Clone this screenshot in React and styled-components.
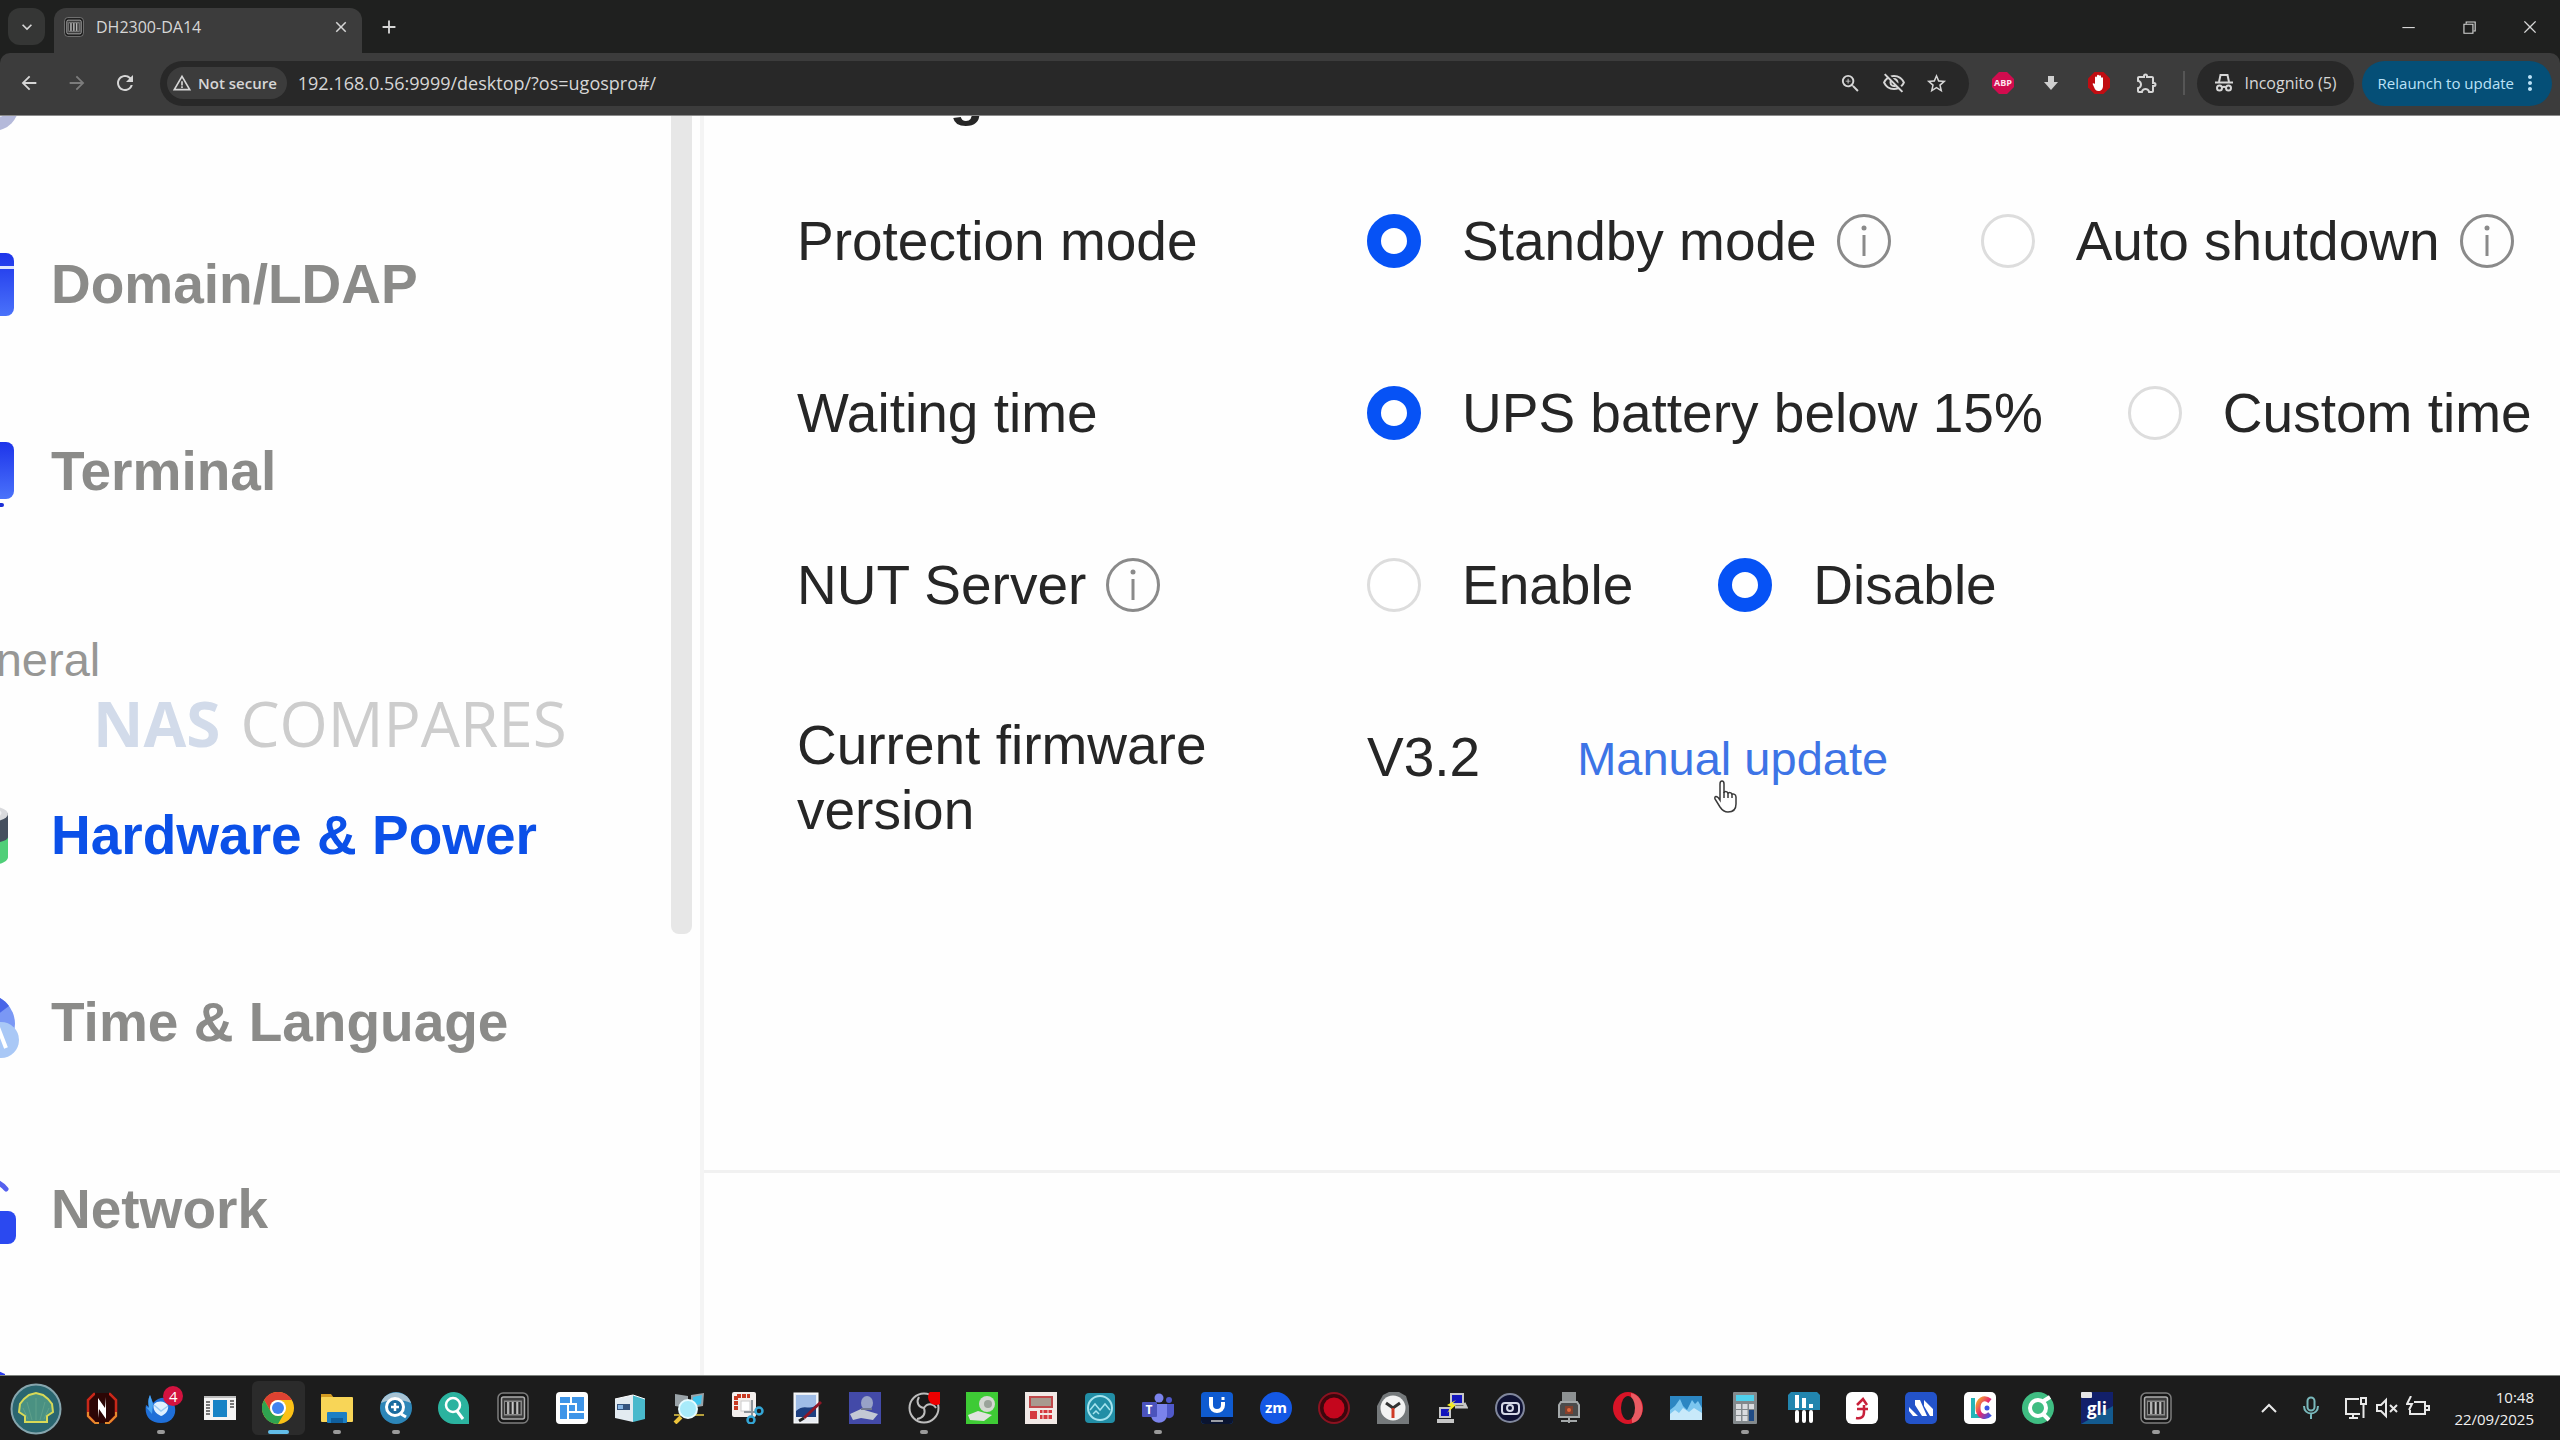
import { useState } from "react";
import styled, { createGlobalStyle } from "styled-components";
import {
  MdAdd,
  MdArrowBack,
  MdArrowForward,
  MdClose,
  MdKeyboardArrowDown,
  MdMoreVert,
  MdOutlineExtension,
  MdOutlineVisibilityOff,
  MdRefresh,
  MdStarBorder,
  MdWarningAmber,
  MdZoomIn,
} from "react-icons/md";
import {
  VscChromeClose,
  VscChromeMinimize,
  VscChromeRestore,
} from "react-icons/vsc";

/* ---------- browser icons ---------- */

const NasIcon = ({ size = 32 }) => (
  <svg width={size} height={size} viewBox="0 0 32 32" fill="none">
    <rect x="1" y="1" width="30" height="30" rx="5" fill="#151515" stroke="#7d7d7d" strokeWidth="1.5" />
    <rect x="4.500" y="5" width="23" height="22" rx="2" fill="#3d3d3d" stroke="#adadad" strokeWidth="1.500" />
    <rect x="7" y="8.500" width="18" height="15" fill="#8a8a8a" />
    <path d="M9 10v12M13.500 10v12M18 10v12M22.500 10v12" stroke="#2b2b2b" strokeWidth="2" />
    <path d="M11 10v12M15.700 10v12M20.200 10v12" stroke="#d5d5d5" strokeWidth="1" />
  </svg>
);

const AbpIcon = () => (
  <svg width="22" height="22" viewBox="0 0 22 22">
    <path d="M7 0h8l7 7v8l-7 7H7l-7-7V7z" fill="#d10c4e" />
    <text x="11" y="14" fontSize="9" fontWeight="700" fill="#ffe3ee" textAnchor="middle" fontFamily="Open Sans, sans-serif">ABP</text>
  </svg>
);

const DownIcon = () => (
  <svg width="16" height="16" viewBox="0 0 16 16">
    <path d="M5 1h6v6h4l-7 8-7-8h4z" fill="#cfcfcf" />
  </svg>
);

const HandIcon = () => (
  <svg width="24" height="24" viewBox="0 0 24 24">
    <path d="M7.500 1h9L23 7.500v9L16.500 23h-9L1 16.500v-9z" fill="#c00d12" />
    <path
      d="M8 13V6.500a1 1 0 0 1 2 0V11V4.800a1 1 0 0 1 2 0V11V5.200a1 1 0 0 1 2 0V12V7.200a1 1 0 0 1 2 0V15c0 3-2 5-4.500 5S8 18.500 7 16l-1.500-3.200c.8-1 1.800-.6 2.500.2z"
      fill="#fff"
    />
  </svg>
);

const IncognitoIcon = () => (
  <svg width="20" height="20" viewBox="0 0 20 20" fill="none" stroke="#d6d6d6" strokeWidth="2">
    <path d="M5 9l1.500-7h7L15 9" />
    <path d="M1 9.500h18" />
    <circle cx="5.500" cy="15" r="2.500" />
    <circle cx="14.500" cy="15" r="2.500" />
    <path d="M8 14.500c1-.8 3-.8 4 0" />
  </svg>
);

/* ---------- control panel icons ---------- */

const UserIcon = () => (
  <svg width="72" height="72" viewBox="0 0 72 72">
    <circle cx="46" cy="44" r="26" fill="#b4b9da" />
    <circle cx="48" cy="42" r="15" fill="#dfe1f1" />
  </svg>
);

const DomainIcon = () => (
  <svg width="72" height="72" viewBox="0 0 72 72">
    <defs>
      <linearGradient id="domain" x1="0" y1="0" x2="0" y2="1">
        <stop offset="0" stopColor="#1d34ea" />
        <stop offset="1" stopColor="#4a72fa" />
      </linearGradient>
    </defs>
    <rect x="0" y="5" width="67" height="63" rx="8" fill="url(#domain)" />
    <rect x="0" y="18" width="67" height="3" fill="#dfe6ff" />
  </svg>
);

const TerminalIcon = () => (
  <svg width="72" height="72" viewBox="0 0 72 72">
    <rect x="0" y="7" width="67" height="57" rx="8" fill="url(#domain)" />
    <rect x="14" y="68" width="43" height="4" rx="2" fill="#1c2fd6" />
  </svg>
);

const PowerIcon = () => (
  <svg width="72" height="72" viewBox="0 0 72 72">
    <path d="M10 14v44c0 12 51 12 51 0V14z" fill="#50cf78" />
    <path d="M10 14v24c0 9 51 9 51 0V14z" fill="#454f5e" />
    <ellipse cx="35.500" cy="15" rx="25.500" ry="9" fill="#d9dadd" />
    <ellipse cx="35.500" cy="14" rx="19" ry="6" fill="#f0f0f2" />
  </svg>
);

const TimeIcon = () => (
  <svg width="72" height="72" viewBox="0 0 72 72">
    <circle cx="38" cy="38" r="30" fill="#7a98f5" />
    <path d="M38 8c10 0 19 5 24 12l-24 18z" fill="#4865e8" />
    <circle cx="54" cy="54" r="18" fill="#a9c8f6" />
    <path d="M45 62l7-18 7 18" stroke="#fff" strokeWidth="4" fill="none" />
  </svg>
);

const NetworkIcon = () => (
  <svg width="72" height="72" viewBox="0 0 72 72">
    <path d="M14 16c11-13 34-13 45 0" stroke="#5661ee" strokeWidth="5" fill="none" strokeLinecap="round" />
    <path d="M23 25c7-7 20-7 27 0" stroke="#6e7bf3" strokeWidth="5" fill="none" strokeLinecap="round" />
    <rect x="2" y="38" width="67" height="33" rx="8" fill="#2b49f0" />
  </svg>
);

const SecurityIcon = () => (
  <svg width="72" height="72" viewBox="0 0 72 72">
    <path d="M30 2l28 12v24c0 18-28 32-28 32S2 56 2 38V14z" fill="#2b3cf0" />
  </svg>
);

const InfoIcon = () => (
  <svg width="54" height="54" viewBox="0 0 54 54" fill="none">
    <circle cx="27" cy="27" r="25.500" stroke="#8a8a8a" strokeWidth="3" />
    <circle cx="27" cy="14" r="2.500" fill="#8a8a8a" />
    <path d="M27 21v21" stroke="#8a8a8a" strokeWidth="3" />
  </svg>
);

/* ---------- taskbar icons, drawn on a 32 x 32 grid ---------- */

const Svg = ({ children }) => (
  <svg width="32" height="32" viewBox="0 0 32 32" fill="none">
    {children}
  </svg>
);

const Label = ({ children, y = 21, size = 14, fill = "#fff", x = 16 }) => (
  <text x={x} y={y} fontSize={size} fontWeight="700" fill={fill} textAnchor="middle" fontFamily="Open Sans, sans-serif">
    {children}
  </text>
);

const apps = [
  {
    name: "Nitro",
    icon: (
      <Svg>
        <path d="M7 1h18l6 6v17l-6 7H7l-6-7V7z" fill="#2c0605" />
        <path d="M9 2H8L2 8v16l6 6M23 2h1l6 6v16l-6 6" stroke="#c9281a" strokeWidth="2.500" />
        <path d="M2 20v4l7 7h4M30 20v4l-7 7h-4" stroke="#e58a2c" strokeWidth="2" />
        <path d="M12 6l7 10 1-11v22l-7-10-1 9z" fill="#fff" />
      </Svg>
    ),
  },
  {
    name: "Thunderbird",
    open: true,
    badge: "4",
    icon: (
      <Svg>
        <path d="M5 3l3 8C14 4 25 4 29 12c4 10-2 19-13 19S-1 24 1 13l3 2C3 11 3 7 5 3z" fill="#1f6fd8" />
        <path d="M5 3l3 9-1 10-6-7 3 1C3 11 3 7 5 3z" fill="#4ba5f2" />
        <path d="M9 12c4-4 12-3 14 2 1 4-3 9-7 10-5-2-9-7-7-12z" fill="#dff0ff" />
        <path d="M9 13l7 6 7-5" stroke="#9ccbf5" strokeWidth="1.500" />
      </Svg>
    ),
  },
  {
    name: "Magnifier window",
    icon: (
      <Svg>
        <rect x="0" y="4" width="32" height="24" fill="#f4f4f4" />
        <path d="M0 5h32" stroke="#bdbdbd" strokeWidth="2" />
        <rect x="9" y="8" width="14" height="17" fill="#1783c6" />
        <path d="M4 9v15M28 8v9" stroke="#777" strokeWidth="4" strokeDasharray="2 1" />
      </Svg>
    ),
  },
  {
    name: "Chrome",
    open: true,
    active: true,
    icon: (
      <Svg>
        <circle cx="16" cy="16" r="16" fill="#fbc116" />
        <path d="M2.140 8A16 16 0 0 1 29.860 8H16a8 8 0 0 0-6.930 12z" fill="#dd4232" />
        <path d="M2.140 8A16 16 0 0 0 16 32l6.930-12A8 8 0 0 1 9.070 20z" fill="#2fa350" />
        <circle cx="16" cy="16" r="8" fill="#fff" />
        <circle cx="16" cy="16" r="6" fill="#4083ee" />
      </Svg>
    ),
  },
  {
    name: "File Explorer",
    open: true,
    icon: (
      <Svg>
        <path d="M0 2h10l3 4H0z" fill="#d39b22" />
        <rect x="0" y="5" width="32" height="25" rx="1" fill="#f8d557" />
        <rect x="6" y="20" width="20" height="11" rx="1" fill="#1c7fc4" />
        <path d="M10 31v-5h12v5z" fill="#0f5f9e" />
      </Svg>
    ),
  },
  {
    name: "Remote search",
    open: true,
    icon: (
      <Svg>
        <circle cx="16" cy="16" r="16" fill="#2d86b8" />
        <path d="M1 11C5-3 27-3 31 11c-8-4-22-4-30 0z" fill="#a7c3d4" />
        <circle cx="15" cy="15" r="8.500" fill="#1a6b9e" stroke="#fff" strokeWidth="3" />
        <path d="M11 15h8M15 11v8" stroke="#fff" strokeWidth="2.500" />
        <path d="M21 22l5 3" stroke="#fff" strokeWidth="3" />
      </Svg>
    ),
  },
  {
    name: "Qfinder",
    icon: (
      <Svg>
        <path d="M16 0a16 16 0 1 0 0 32h15V17A16 16 0 0 0 16 0z" fill="#2bb39f" />
        <circle cx="15" cy="13" r="7" stroke="#fff" strokeWidth="2.500" />
        <path d="M19 19l6 8" stroke="#fff" strokeWidth="3" />
      </Svg>
    ),
  },
  { name: "Ugreen NAS", icon: <NasIcon /> },
  {
    name: "Control panel",
    icon: (
      <Svg>
        <rect width="32" height="32" rx="4" fill="#fff" />
        <rect x="4" y="5" width="24" height="22" fill="#3f95e8" />
        <path d="M15 5v7M4 12h16v8M12 12v8h16M12 20v7M20 20v0" stroke="#fff" strokeWidth="2" />
      </Svg>
    ),
  },
  {
    name: "Server",
    icon: (
      <Svg>
        <path d="M1 7l18-4v27L1 26z" fill="#e3ebf1" />
        <path d="M19 3l12 4v20l-12 3z" fill="#49b9cc" />
        <path d="M1 7l18-4 12 4" stroke="#fff" />
        <rect x="3" y="12" width="13" height="6" fill="#35547e" />
        <rect x="4" y="13" width="5" height="4" fill="#86b5e4" />
      </Svg>
    ),
  },
  {
    name: "Network scanner",
    icon: (
      <Svg>
        <path d="M2 2l13 2v12L2 14zM18 3l13-2-1 13-12 2z" fill="#9aa3a8" />
        <path d="M20 5l9-2-1 9-8 2z" fill="#3fc3ec" />
        <path d="M1 23h30" stroke="#b6a03c" strokeWidth="2" />
        <circle cx="15" cy="17" r="9" fill="#a8ebfa" stroke="#e6fbff" strokeWidth="2" />
        <path d="M8 25l-6 6" stroke="#ecc33b" strokeWidth="4" />
      </Svg>
    ),
  },
  {
    name: "Snip",
    icon: (
      <Svg>
        <rect x="0" y="0" width="24" height="25" rx="2" fill="#f3efed" />
        <path d="M4 18V4h14" stroke="#c83a22" strokeWidth="4" strokeDasharray="4 1" />
        <rect x="9" y="9" width="9" height="10" fill="#fff" stroke="#ccc" />
        <path d="M20 8v16M12 20h13" stroke="#8e959b" strokeWidth="2" />
        <circle cx="27" cy="19" r="3.500" stroke="#34a6d6" strokeWidth="2.500" />
        <circle cx="19" cy="28" r="3.500" stroke="#34a6d6" strokeWidth="2.500" />
      </Svg>
    ),
  },
  {
    name: "Image editor",
    icon: (
      <Svg>
        <rect x="4" y="1" width="24" height="30" fill="#e8ecf2" stroke="#fff" />
        <rect x="6" y="3" width="20" height="22" fill="#1d3f80" />
        <path d="M6 3h20v10c-6 6-12-2-20 6z" fill="#9fbce6" />
        <path d="M31 10L14 26" stroke="#8f1626" strokeWidth="3" />
        <path d="M14 26l-5 3" stroke="#222" strokeWidth="3" />
      </Svg>
    ),
  },
  {
    name: "Scanner blue",
    icon: (
      <Svg>
        <rect width="32" height="32" fill="#434aa8" />
        <path d="M1 22l11-5 17 5-5 6-12-2-8 2z" fill="#c3c8d4" />
        <ellipse cx="18" cy="11" rx="6" ry="7" fill="#98a2c7" />
        <path d="M12 17h11" stroke="#71788e" strokeWidth="2" />
      </Svg>
    ),
  },
  {
    name: "OBS",
    open: true,
    icon: (
      <Svg>
        <circle cx="16" cy="16" r="14.500" fill="#191919" stroke="#bdbdbd" strokeWidth="2" />
        <path d="M16 16c-6-1-8-6-5-11M16 16c3-5 9-5 12 0M16 16c2 6-1 10-7 11" stroke="#bdbdbd" strokeWidth="2" />
        <circle cx="28" cy="5" r="8" fill="#ee0000" />
      </Svg>
    ),
  },
  {
    name: "Scanner green",
    icon: (
      <Svg>
        <rect width="32" height="32" fill="#3ecb35" />
        <path d="M2 23l10-4 14 4-8 6-14-1z" fill="#dfe3dd" />
        <circle cx="21" cy="12" r="8" fill="#d3d8d2" />
        <circle cx="22" cy="12" r="4" fill="#9aa39a" />
      </Svg>
    ),
  },
  {
    name: "Raid calculator",
    icon: (
      <Svg>
        <rect width="32" height="32" fill="#f1e9e6" />
        <rect x="5" y="5" width="22" height="10" fill="#a89a8f" stroke="#c0484a" strokeWidth="2" />
        <path d="M5 19h7v8H5zM15 18h12v3H15zM15 23h12v4H15z" fill="#d5393f" />
        <path d="M18 18v9M23 18v9" stroke="#f1e9e6" />
      </Svg>
    ),
  },
  {
    name: "Monitor tool",
    icon: (
      <Svg>
        <rect x="1" y="1" width="30" height="30" rx="4" fill="#228ea6" />
        <circle cx="16" cy="16" r="12" stroke="#a5e3ee" strokeWidth="2" />
        <path d="M6 18l5-6 5 6 5-6 5 6M9 22l3-3 3 3" stroke="#a5e3ee" strokeWidth="1.500" />
      </Svg>
    ),
  },
  {
    name: "Teams",
    open: true,
    icon: (
      <Svg>
        <circle cx="17" cy="6" r="4.500" fill="#7b83eb" />
        <circle cx="27" cy="8" r="3" fill="#5059c9" />
        <path d="M22 12h10v9c0 5-6 7-9 3z" fill="#5059c9" />
        <path d="M8 12h17v11c0 9-14 11-16 1z" fill="#7b83eb" />
        <rect x="0" y="10" width="15" height="15" rx="1" fill="#4b53bc" />
        <Label x={7} y={22} size={12}>T</Label>
      </Svg>
    ),
  },
  {
    name: "UniFi",
    icon: (
      <Svg>
        <rect width="32" height="32" rx="4" fill="#0f5bd0" />
        <path d="M0 25h32v3a4 4 0 0 1-4 4H4a4 4 0 0 1-4-4z" fill="#0a1430" />
        <path d="M10 5v8c0 8 12 8 12 0v-3" stroke="#fff" strokeWidth="4" />
        <path d="M22 5v3" stroke="#fff" strokeWidth="3" />
        <path d="M10 29h12" stroke="#ccc" strokeWidth="1.500" />
      </Svg>
    ),
  },
  {
    name: "Zoom",
    icon: (
      <Svg>
        <circle cx="16" cy="16" r="16" fill="#1458e4" />
        <Label y={21} size={15}>zm</Label>
      </Svg>
    ),
  },
  {
    name: "Recorder",
    icon: (
      <Svg>
        <circle cx="16" cy="16" r="15" fill="#3c070d" stroke="#8c1220" strokeWidth="2" />
        <circle cx="16" cy="16" r="10.500" fill="#c4061d" />
      </Svg>
    ),
  },
  {
    name: "Clock",
    icon: (
      <Svg>
        <path d="M0 32V14l6-11L12 0h10l7 4 3 10v18z" fill="#75797b" />
        <circle cx="16" cy="16" r="12.500" fill="#f3f3f3" />
        <path d="M9 11l7 5 7-5" stroke="#333" strokeWidth="3" />
        <path d="M16 16v10" stroke="#cf3a25" strokeWidth="3" />
      </Svg>
    ),
  },
  {
    name: "PuTTY",
    icon: (
      <Svg>
        <rect x="15" y="2" width="12" height="10" fill="#1315bd" stroke="#c6c6c6" strokeWidth="2" />
        <path d="M19 15h11l-2-4" stroke="#c6c6c6" strokeWidth="3" />
        <rect x="4" y="16" width="10" height="9" fill="#1315bd" stroke="#c6c6c6" strokeWidth="2" />
        <path d="M1 29h17" stroke="#c6c6c6" strokeWidth="4" />
        <path d="M20 8l-9 5 4 2-4 6 9-8-4-1z" fill="#f4ed22" />
      </Svg>
    ),
  },
  {
    name: "Camera",
    icon: (
      <Svg>
        <circle cx="16" cy="16" r="14" fill="#0f1233" stroke="#80879c" strokeWidth="2" />
        <rect x="8" y="11" width="17" height="11" rx="3" stroke="#d4d8e6" strokeWidth="2" />
        <circle cx="16" cy="16" r="3" stroke="#d4d8e6" strokeWidth="2" />
      </Svg>
    ),
  },
  {
    name: "Webcam",
    icon: (
      <Svg>
        <rect x="9" y="0" width="14" height="10" fill="#8d9192" />
        <path d="M8 10h16l2 3v12H6V13z" fill="#4b4b4b" stroke="#a4a8a9" strokeWidth="2" />
        <rect x="12" y="14" width="8" height="8" fill="#83402d" />
        <circle cx="16" cy="18" r="2" fill="#e2683c" />
        <path d="M16 26v5M8 29h16" stroke="#a4a8a9" strokeWidth="2" />
      </Svg>
    ),
  },
  {
    name: "Opera",
    icon: (
      <Svg>
        <ellipse cx="16" cy="16" rx="15" ry="16" fill="#d81427" />
        <path d="M19 1c14 2 16 27 1 30z" fill="#e95b63" />
        <ellipse cx="16" cy="16" rx="7" ry="12" fill="#1c1c1c" />
      </Svg>
    ),
  },
  {
    name: "Wave",
    icon: (
      <Svg>
        <rect x="0" y="4" width="32" height="24" fill="#2c86c2" />
        <path d="M0 18l5-4 5-7 3 7 4 4 5-10 3 4 3-3 4 7v12H0z" fill="#7cc6ef" />
        <path d="M0 22l5-4 4 3 4-5 6 4 5-4 8 5v7H0z" fill="#c8e9fa" />
      </Svg>
    ),
  },
  {
    name: "Calculator",
    open: true,
    icon: (
      <Svg>
        <rect x="4" y="0" width="24" height="32" rx="1" fill="#83898c" />
        <rect x="7" y="3" width="18" height="6" fill="#4fd0ec" />
        <path d="M7 12h5v5H7zM13.500 12h5v5h-5zM20 12h5v5h-5zM7 18h5v5H7zM13.500 18h5v5h-5zM7 24h5v5H7zM13.500 24h5v5h-5z" fill="#dadcdf" />
        <rect x="20" y="18" width="5" height="11" fill="#1f4b85" />
      </Svg>
    ),
  },
  {
    name: "Statistics",
    icon: (
      <Svg>
        <path d="M3 0h26l3 3v15H0V3z" fill="#2285ae" />
        <path d="M9 3v13M16 6v10M23 12v4" stroke="#fff" strokeWidth="4" />
        <path d="M9 20v9M16 20v9M23 20v9" stroke="#fff" strokeWidth="4" strokeLinecap="round" />
      </Svg>
    ),
  },
  {
    name: "Flash reader",
    icon: (
      <Svg>
        <rect width="32" height="32" rx="6" fill="#fff" />
        <path d="M11 13l6-6 4 6M11 17h11M18 13v7c0 5-3 7-8 6" stroke="#c8203a" strokeWidth="2.500" />
      </Svg>
    ),
  },
  {
    name: "Numark",
    icon: (
      <Svg>
        <rect width="32" height="32" rx="5" fill="#2353c9" />
        <path d="M4 15l9 9H8l-4-5zM10 8h5l7 16h-5L10 13zM19 8l9 9v7h-3l-6-10z" fill="#fff" />
      </Svg>
    ),
  },
  {
    name: "LC",
    icon: (
      <Svg>
        <defs>
          <linearGradient id="lc" x1="0" y1="0" x2="1" y2="1">
            <stop offset="0" stopColor="#f4a52b" />
            <stop offset="0.500" stopColor="#e8286f" />
            <stop offset="1" stopColor="#3a55e6" />
          </linearGradient>
        </defs>
        <rect width="32" height="32" rx="5" fill="#fff" />
        <path d="M9 6v18h8" stroke="#25b5b8" strokeWidth="4" />
        <path d="M26 9c-6-5-12-1-12 7s7 11 12 6" stroke="url(#lc)" strokeWidth="5" />
        <circle cx="23" cy="16" r="2.500" fill="#3a55e6" />
      </Svg>
    ),
  },
  {
    name: "Qsync",
    icon: (
      <Svg>
        <circle cx="16" cy="16" r="16" fill="#3fbd82" />
        <circle cx="16" cy="16" r="8" stroke="#fff" strokeWidth="4" />
        <path d="M20 10l8-5M21 22l6 6" stroke="#fff" strokeWidth="4" />
      </Svg>
    ),
  },
  {
    name: "GLI",
    icon: (
      <Svg>
        <rect width="32" height="32" fill="#12206a" />
        <path d="M0 32h32V14z" fill="#135a8f" />
        <rect x="0" y="0" width="11" height="6" rx="1" fill="#e6e6e6" />
        <Label y={23} size={17}>gli</Label>
      </Svg>
    ),
  },
  { name: "Ugreen NAS client", open: true, icon: <NasIcon /> },
];

const menu = [
  { text: "Domain/LDAP", icon: <DomainIcon /> },
  { text: "Terminal", icon: <TerminalIcon /> },
];

const generalMenu = [
  { text: "Hardware & Power", icon: <PowerIcon /> },
  { text: "Time & Language", icon: <TimeIcon /> },
  { text: "Network", icon: <NetworkIcon /> },
];

function RadioOption({ name, label, checked, onChange, info }) {
  return (
    <StOption $info={info}>
      <StRadioLabel>
        <StRadio type="radio" name={name} checked={checked} onChange={() => onChange(label)} />
        {label}
      </StRadioLabel>
      {info && <InfoIcon />}
    </StOption>
  );
}

function RadioRow({ name, title, options, initial, titleInfo, optionInfo }) {
  const [value, setValue] = useState(initial);
  return (
    <StRow>
      <StRowTitle>
        {title}
        {titleInfo && <InfoIcon />}
      </StRowTitle>
      <StControls role="radiogroup" aria-label={title}>
        {options.map((option) => (
          <RadioOption
            key={option}
            name={name}
            label={option}
            checked={value === option}
            onChange={setValue}
            info={optionInfo}
          />
        ))}
      </StControls>
    </StRow>
  );
}

function BrowserBar() {
  const [url, setUrl] = useState("192.168.0.56:9999/desktop/?os=ugospro#/");
  return (
    <StBrowser>
      <StTabStrip>
        <StTabSearch aria-label="Search tabs"><MdKeyboardArrowDown size={20} /></StTabSearch>
        <StTab>
          <NasIcon size={20} />
          <span>DH2300-DA14</span>
          <StIconBtn aria-label="Close tab" $width={24}><MdClose size={18} /></StIconBtn>
        </StTab>
        <StIconBtn aria-label="New tab" $width={54}><MdAdd size={22} /></StIconBtn>
        <StWindowBtns>
          <StIconBtn aria-label="Minimize" $width={61}><VscChromeMinimize size={18} /></StIconBtn>
          <StIconBtn aria-label="Restore" $width={61}><VscChromeRestore size={18} /></StIconBtn>
          <StIconBtn aria-label="Close" $width={61}><VscChromeClose size={18} /></StIconBtn>
        </StWindowBtns>
      </StTabStrip>
      <StToolbar>
        <StIconBtn aria-label="Back" $width={48}><MdArrowBack size={22} /></StIconBtn>
        <StIconBtn aria-label="Forward" $width={48} disabled><MdArrowForward size={22} /></StIconBtn>
        <StIconBtn aria-label="Reload" $width={48}><MdRefresh size={24} /></StIconBtn>
        <StAddress>
          <StChip><MdWarningAmber size={20} />Not secure</StChip>
          <StUrl aria-label="Address" value={url} onChange={(e) => setUrl(e.target.value)} />
          <StIconBtn aria-label="Zoom" $width={43}><MdZoomIn size={23} /></StIconBtn>
          <StIconBtn aria-label="Third-party cookies blocked" $width={43}><MdOutlineVisibilityOff size={24} /></StIconBtn>
          <StIconBtn aria-label="Bookmark" $width={43}><MdStarBorder size={23} /></StIconBtn>
        </StAddress>
        <StExtensions>
          <StIconBtn aria-label="Adblock Plus" $width={48}><AbpIcon /></StIconBtn>
          <StIconBtn aria-label="Downloader" $width={48}><DownIcon /></StIconBtn>
          <StIconBtn aria-label="Adblock" $width={48}><HandIcon /></StIconBtn>
          <StIconBtn aria-label="Extensions" $width={48}><MdOutlineExtension size={24} /></StIconBtn>
        </StExtensions>
        <StPill><IncognitoIcon />Incognito (5)</StPill>
        <StPill $update>Relaunch to update<MdMoreVert size={24} /></StPill>
      </StToolbar>
    </StBrowser>
  );
}

function Sidebar() {
  const [current, setCurrent] = useState("Hardware & Power");
  const renderItem = (item) => (
    <StNavItem key={item.text} $active={item.text === current} onClick={() => setCurrent(item.text)}>
      {item.icon}
      {item.text}
    </StNavItem>
  );
  return (
    <StSidebar>
      <StNav>
        <StNavItem aria-label="Users"><UserIcon /></StNavItem>
        {menu.map(renderItem)}
        <StNavGroup>General</StNavGroup>
        {generalMenu.map(renderItem)}
        <StNavItem aria-label="Security"><SecurityIcon /></StNavItem>
      </StNav>
      <StScrollThumb />
      <StWatermark><b>NAS</b> COMPARES</StWatermark>
    </StSidebar>
  );
}

function Taskbar() {
  return (
    <StTaskbar>
      <StStart aria-label="Start">
        <svg width="52" height="52" viewBox="0 0 52 52" fill="none">
          <circle cx="26" cy="26" r="24.500" fill="#2a6670" stroke="#86a5ad" strokeWidth="2" />
          <path d="M15 39v-6l-6-4 1-8 4-5 5-4 7-2 7 2 5 4 4 5 1 8-6 4v6z" fill="#4a9182" stroke="#d7d957" strokeWidth="2" />
          <path d="M26 37V15M22 37l-5-18M30 37l5-18M18 36l-5-11M34 36l5-11" stroke="#5fa08a" strokeWidth="1" />
        </svg>
      </StStart>
      <StApps>
        {apps.map((app) => (
          <StApp key={app.name} aria-label={app.name} $open={app.open} $active={app.active}>
            {app.icon}
            {app.badge && <StBadge>{app.badge}</StBadge>}
          </StApp>
        ))}
      </StApps>
      <StTray>
        <svg width="18" height="12" viewBox="0 0 18 12" fill="none">
          <path d="M2 10l7-7 7 7" stroke="#e8e8e8" strokeWidth="2" />
        </svg>
        <svg width="18" height="24" viewBox="0 0 18 24" fill="none" stroke="#79b8bb" strokeWidth="2">
          <rect x="5.500" y="1.500" width="7" height="13" rx="3.500" />
          <path d="M2 10c0 10 14 10 14 0M9 18v5" />
        </svg>
        <StStatus>
          <svg width="24" height="24" viewBox="0 0 24 24" fill="none" stroke="#e8e8e8" strokeWidth="2">
            <path d="M15 3H2v15h14M9 18v4M5 22h9" />
            <path d="M17 2h5v6h-5zM19.500 8v14" />
          </svg>
          <svg width="22" height="22" viewBox="0 0 22 22" fill="none" stroke="#e8e8e8" strokeWidth="2">
            <path d="M1 8h4l5-5v16l-5-5H1zM14 8l7 7M21 8l-7 7" />
          </svg>
          <svg width="24" height="24" viewBox="0 0 24 24" fill="none" stroke="#e8e8e8" strokeWidth="2">
            <path d="M8 6h11v12H4v-4M20 10h3v4h-3" />
            <path d="M5 0L1 8h5l-3 6" />
          </svg>
        </StStatus>
        <StClock>
          <time>10:48</time>
          <time>22/09/2025</time>
        </StClock>
      </StTray>
    </StTaskbar>
  );
}

function App() {
  return (
    <StScreen>
      <GlobalStyle />
      <BrowserBar />
      <StPage>
        <Sidebar />
        <StContent>
          <StPanel>
            <StHeading>Settings</StHeading>
            <StRows>
              <RadioRow
                name="protection"
                title="Protection mode"
                options={["Standby mode", "Auto shutdown"]}
                initial="Standby mode"
                optionInfo
              />
              <RadioRow
                name="waiting"
                title="Waiting time"
                options={["UPS battery below 15%", "Custom time"]}
                initial="UPS battery below 15%"
              />
              <RadioRow
                name="nut"
                title="NUT Server"
                options={["Enable", "Disable"]}
                initial="Disable"
                titleInfo
              />
              <StRow>
                <StRowTitle>Current firmware version</StRowTitle>
                <StControls>
                  <span>V3.2</span>
                  <StLinkWrap>
                    <StLink href="#update">Manual update</StLink>
                    <StPointer width="24" height="34" viewBox="0 0 24 34">
                      <path
                        d="M7 20V4c0-4 4-4 4 0v9c0-2 4-2 4 1 0-2 4-2 4 1 0-2 4-1 4 2v7c0 5-3 8-8 8-4 0-6-2-8-5l-5-8c-1-3 2-4 5 1z"
                        fill="#fff"
                        stroke="#3a3a3a"
                        strokeWidth="1.500"
                      />
                      <path d="M11 12v6M15 14v4M19 15v3" stroke="#3a3a3a" strokeWidth="1.500" />
                    </StPointer>
                  </StLinkWrap>
                </StControls>
              </StRow>
            </StRows>
          </StPanel>
          <StPanelFooter />
        </StContent>
      </StPage>
      <Taskbar />
    </StScreen>
  );
}

const GlobalStyle = createGlobalStyle`
  * {
    box-sizing: border-box;
  }
  body {
    margin: 0;
    overflow: hidden;
    font-family: "Liberation Sans", Arial, sans-serif;
  }
  button {
    border: 0;
    padding: 0;
    background: none;
    font: inherit;
    color: inherit;
  }
  svg {
    flex-shrink: 0;
  }
`;

const StScreen = styled.div`
  display: flex;
  flex-direction: column;
  height: 100vh;
  background: #fefefe;
`;

const StBrowser = styled.header`
  flex-shrink: 0;
  background: #1f201f;
  color: #d6d6d6;
  font-family: "Open Sans", "Noto Sans", sans-serif;
  font-size: 16px;
`;

const StTabStrip = styled.div`
  display: flex;
  align-items: stretch;
  height: 53px;
  padding: 0 0 0 8px;
`;

const StTabSearch = styled.button`
  display: grid;
  place-items: center;
  width: 37px;
  height: 37px;
  margin: 8px 9px 0 0;
  border-radius: 12px;
  background: #353635;
`;

const StTab = styled.div`
  display: flex;
  align-items: center;
  gap: 12px;
  width: 308px;
  margin-top: 8px;
  padding: 0 9px 8px 10px;
  border-radius: 12px 12px 0 0;
  background: #3c3c3c;
  font-size: 16px;

  span {
    flex: 1;
  }
`;

const StIconBtn = styled.button`
  display: flex;
  align-items: center;
  justify-content: center;
  width: ${({ $width }) => $width}px;

  &:disabled {
    color: #7c7c7c;
  }
`;

const StWindowBtns = styled.div`
  display: flex;
  margin-left: auto;
`;

const StToolbar = styled.div`
  display: flex;
  align-items: center;
  height: 63px;
  padding: 0 8px 2px 5px;
  border-bottom: 1px solid #8b8b8b;
  border-radius: 10px 10px 0 0;
  background: #3c3c3c;
`;

const StAddress = styled.div`
  display: flex;
  flex: 1;
  align-items: center;
  height: 45px;
  margin-left: 11px;
  padding: 0 11px 0 7px;
  border-radius: 23px;
  background: #282828;
`;

const StChip = styled.button`
  display: flex;
  align-items: center;
  gap: 6px;
  height: 32px;
  padding: 0 10px 0 5px;
  border-radius: 16px;
  background: #3c3c3c;
  font-size: 15px;
  font-weight: 600;
`;

const StUrl = styled.input`
  flex: 1;
  margin-left: 11px;
  padding: 0;
  border: 0;
  outline: 0;
  background: none;
  color: #d6d6d6;
  font-family: inherit;
  font-size: 18px;
`;

const StExtensions = styled.div`
  display: flex;
  margin: 0 12px 0 10px;
  padding-right: 12px;
  border-right: 2px solid #565656;
`;

const StPill = styled.button`
  display: flex;
  align-items: center;
  gap: ${({ $update }) => ($update ? 4 : 10)}px;
  height: 45px;
  margin-left: ${({ $update }) => ($update ? 8 : 0)}px;
  padding: ${({ $update }) => ($update ? "0 10px 0 16px" : "0 17px")};
  border-radius: 23px;
  background: ${({ $update }) => ($update ? "#054f77" : "#282828")};
  color: ${({ $update }) => ($update ? "#bce2f7" : "#d6d6d6")};
  font-size: ${({ $update }) => ($update ? 15 : 16)}px;
`;

const StPage = styled.main`
  display: flex;
  flex: 1;
  min-height: 0;
  overflow: hidden;
`;

const StSidebar = styled.aside`
  position: relative;
  display: flex;
  flex-shrink: 0;
  width: 704px;
  padding-right: 8px;
  border-right: 4px solid #f4f4f4;
`;

/* the list is scrolled a little to the right and down */
const StNav = styled.nav`
  display: flex;
  flex: 1;
  flex-direction: column;
  margin: -113px 0 0 -67px;
`;

const StNavItem = styled.button`
  display: flex;
  flex-shrink: 0;
  align-items: center;
  gap: 32px;
  height: 187px;
  padding-left: 14px;
  color: ${({ $active }) => ($active ? "#0b50e8" : "#8b8b89")};
  font-size: 55px;
  font-weight: 700;
  white-space: nowrap;
`;

const StNavGroup = styled.div`
  display: flex;
  flex-shrink: 0;
  align-items: center;
  height: 177px;
  padding-top: 14px;
  color: #979795;
  font-size: 47px;
`;

const StScrollThumb = styled.div`
  width: 21px;
  height: 65%;
  border-radius: 0 0 8px 8px;
  background: #e7e7e7;
`;

const StWatermark = styled.div`
  position: absolute;
  top: 565px;
  left: 93px;
  color: #cdcdcd;
  font-family: "Open Sans", "Noto Sans", sans-serif;
  font-size: 62px;
  font-weight: 500;
  line-height: 84px;
  white-space: nowrap;
  pointer-events: none;

  b {
    margin-right: 4px;
    color: #d2dbea;
  }
`;

const StContent = styled.section`
  display: flex;
  flex: 1;
  flex-direction: column;
  min-width: 0;
`;

const StPanel = styled.div`
  flex: 1;
  min-height: 0;
  padding-left: 93px;
  color: #262626;
  font-size: 55px;
  line-height: 65px;
`;

const StHeading = styled.h2`
  margin: -53px 0 69px;
  font-size: 55px;
  line-height: 65px;
`;

const StRows = styled.div`
  display: flex;
  flex-direction: column;
  gap: 84px;
`;

const StRow = styled.div`
  display: grid;
  grid-template-columns: 570px 1fr;
  align-items: start;
`;

const StRowTitle = styled.div`
  display: flex;
  align-items: center;
  gap: 20px;

  ${StRow}:not(:last-child) & {
    min-height: 88px;
  }
`;

const StControls = styled.div`
  display: flex;
  align-items: center;
  gap: 85px;
  min-height: 88px;
  white-space: nowrap;
`;

const StOption = styled.div`
  display: flex;
  align-items: center;
  gap: 20px;
  padding-right: ${({ $info }) => ($info ? 5 : 0)}px;
`;

const StRadioLabel = styled.label`
  display: flex;
  align-items: center;
  gap: 41px;
`;

const StRadio = styled.input`
  appearance: none;
  width: 54px;
  height: 54px;
  margin: 0;
  border: 3px solid #dddddd;
  border-radius: 50%;
  background: #fff;

  &:checked {
    border: 14px solid #0652f5;
  }
`;

const StLinkWrap = styled.span`
  position: relative;
  margin-left: 12px;
`;

const StLink = styled.a`
  color: #3d74e6;
  font-size: 47px;
  text-decoration: none;
`;

const StPointer = styled.svg`
  position: absolute;
  top: 56px;
  left: 136px;
`;

const StPanelFooter = styled.footer`
  height: 205px;
  border-top: 3px solid #f1f1f1;
`;

const StTaskbar = styled.footer`
  display: flex;
  flex-shrink: 0;
  height: 65px;
  border-top: 1px solid #7d827d;
  background: #1c1c1c;
  color: #f0f0f0;
  font-family: "Open Sans", "Noto Sans", sans-serif;
`;

const StStart = styled.button`
  display: flex;
  align-items: center;
  justify-content: center;
  width: 73px;
  padding: 2px 2px 0 0;
`;

const StApps = styled.div`
  display: grid;
  flex: 1;
  grid-template-columns: repeat(36, 1fr);
`;

const StApp = styled.button`
  position: relative;
  display: flex;
  align-items: center;
  justify-content: center;
  margin: 5px 3px;
  border-radius: 6px;
  background: ${({ $active }) => ($active ? "#2b2b2b" : "none")};

  &::after {
    content: "";
    position: absolute;
    bottom: 1px;
    display: ${({ $open }) => ($open ? "block" : "none")};
    width: ${({ $active }) => ($active ? 21 : 8)}px;
    height: 4px;
    border-radius: 2px;
    background: ${({ $active }) => ($active ? "#62bde8" : "#9a9a9a")};
  }
`;

const StBadge = styled.span`
  position: absolute;
  top: 5px;
  right: 4px;
  width: 20px;
  height: 20px;
  border-radius: 50%;
  background: #d3123f;
  color: #fff;
  font-size: 15px;
  line-height: 20px;
  text-align: center;
`;

const StTray = styled.div`
  display: flex;
  align-items: center;
  justify-content: flex-end;
  gap: 24px;
  width: 375px;
  padding-right: 26px;
`;

const StStatus = styled.div`
  display: flex;
  align-items: center;
  gap: 8px;
`;

const StClock = styled.div`
  display: flex;
  flex-direction: column;
  align-items: flex-end;
  font-size: 15px;
  line-height: 22px;
`;

export default App;
